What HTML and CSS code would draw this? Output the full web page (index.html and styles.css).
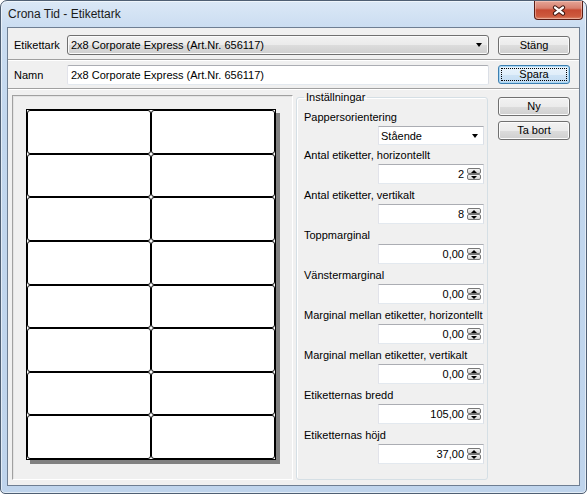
FILE: index.html
```
<!DOCTYPE html>
<html lang="sv">
<head>
<meta charset="UTF-8">
<title>Crona Tid - Etikettark</title>
<link rel="stylesheet" href="styles.css">
</head>
<body>

<div class="window">

    <!-- titelrad -->
    <div class="titlebar">
        <span class="title">Crona Tid - Etikettark</span>
        <div class="close">
            <svg width="14" height="11" viewBox="0 0 14 11">
                <path d="M3 2.5 L11 8.5 M11 2.5 L3 8.5" stroke="#3b1510" stroke-width="4.2" stroke-linecap="round" fill="none"/>
                <path d="M3 2.5 L11 8.5 M11 2.5 L3 8.5" stroke="#fff" stroke-width="2.2" stroke-linecap="round" fill="none"/>
            </svg>
        </div>
    </div>

    <div class="client">

        <div class="toprow first">
            <span class="lbl">Etikettark</span>
            <div class="combo wide">
                <span>2x8 Corporate Express (Art.Nr. 656117)</span>
                <i class="arrow"></i>
            </div>
            <div class="btn">Stäng</div>
        </div>

        <div class="toprow second">
            <span class="lbl">Namn</span>
            <div class="textbox wide">2x8 Corporate Express (Art.Nr. 656117)</div>
            <div class="btn default"><span class="focus">Spara</span></div>
        </div>

        <div class="main">

            <!-- förhandsvisning -->
            <div class="preview">
                <div class="sheet">
                    <div class="label"></div><div class="label"></div>
                    <div class="label"></div><div class="label"></div>
                    <div class="label"></div><div class="label"></div>
                    <div class="label"></div><div class="label"></div>
                    <div class="label"></div><div class="label"></div>
                    <div class="label"></div><div class="label"></div>
                    <div class="label"></div><div class="label"></div>
                    <div class="label"></div><div class="label"></div>
                </div>
            </div>

            <fieldset class="settings">
                <legend>Inställningar</legend>

                <div class="fld-label">Pappersorientering</div>
                <div class="select">
                    <span>Stående</span>
                    <i class="arrow"></i>
                </div>

                <div class="fld-label">Antal etiketter, horizontellt</div>
                <div class="spinbox"><span>2</span><div class="spin"><b class="up"></b><b class="down"></b></div></div>

                <div class="fld-label">Antal etiketter, vertikalt</div>
                <div class="spinbox"><span>8</span><div class="spin"><b class="up"></b><b class="down"></b></div></div>

                <div class="fld-label">Toppmarginal</div>
                <div class="spinbox"><span>0,00</span><div class="spin"><b class="up"></b><b class="down"></b></div></div>

                <div class="fld-label">Vänstermarginal</div>
                <div class="spinbox"><span>0,00</span><div class="spin"><b class="up"></b><b class="down"></b></div></div>

                <div class="fld-label">Marginal mellan etiketter, horizontellt</div>
                <div class="spinbox"><span>0,00</span><div class="spin"><b class="up"></b><b class="down"></b></div></div>

                <div class="fld-label">Marginal mellan etiketter, vertikalt</div>
                <div class="spinbox"><span>0,00</span><div class="spin"><b class="up"></b><b class="down"></b></div></div>

                <div class="fld-label">Etiketternas bredd</div>
                <div class="spinbox"><span>105,00</span><div class="spin"><b class="up"></b><b class="down"></b></div></div>

                <div class="fld-label">Etiketternas höjd</div>
                <div class="spinbox"><span>37,00</span><div class="spin"><b class="up"></b><b class="down"></b></div></div>
            </fieldset>

            <div class="side">
                <div class="btn">Ny</div>
                <div class="btn">Ta bort</div>
            </div>

        </div>
    </div>
</div>

</body>
</html>
```

FILE: styles.css
```
body {
    margin: 0;
    font-family: "Liberation Sans", Arial, sans-serif;
    font-size: 11px;
    color: #000;
    background: #fff;
}

/* ===== fönster ===== */
.window {
    box-sizing: border-box;
    width: 587px;
    height: 494px;
    border: 1px solid #4f5f73;
    border-radius: 7px 7px 5px 5px;
    background: linear-gradient(to bottom, #dbe8f6 0, #cbddf1 26px, #c2d7ee 120px, #bfd4ec 100%);
    box-shadow: inset 0 0 0 1px rgba(255,255,255,0.55);
    display: flex;
    flex-direction: column;
}

.titlebar {
    height: 26px;
    display: flex;
    align-items: flex-start;
    padding-left: 7px;
}

.title {
    flex: 1;
    line-height: 26px;
    font-size: 12px;
    color: #1b1b1b;
}

.close {
    width: 47px;
    height: 18px;
    margin-right: 3px;
    border: 1px solid #5a1d14;
    border-top: none;
    border-radius: 0 0 4px 4px;
    background: linear-gradient(to bottom, #e4a597 0%, #d7806f 40%, #c64a32 50%, #cd5a3e 85%, #dc8a6e 100%);
    box-shadow: inset 0 0 0 1px rgba(255,220,210,0.45);
    display: flex;
    align-items: center;
    justify-content: center;
}

.client {
    flex: 1;
    margin: 0 6px 7px;
    border: 1px solid #6e7e92;
    background: #f0f0f0;
    display: flex;
    flex-direction: column;
}

/* ===== översta raderna ===== */
.toprow {
    box-sizing: border-box;
    display: flex;
    align-items: center;
    padding-left: 6px;
}

.toprow.first {
    height: 32px;
    padding-top: 3px;
    border-bottom: 1px solid #a0a0a0;
}

.toprow.second {
    height: 29px;
    border-top: 1px solid #fff;
    border-bottom: 1px solid #a0a0a0;
}

.lbl {
    width: 53px;
}

.wide {
    box-sizing: border-box;
    width: 422px;
    height: 20px;
    margin-right: 9px;
}

/* knappar */
.btn {
    box-sizing: border-box;
    width: 72px;
    height: 19px;
    border: 1px solid #707070;
    border-radius: 3px;
    background: linear-gradient(to bottom, #f2f2f2 0%, #ebebeb 50%, #dddddd 50%, #cfcfcf 100%);
    box-shadow: inset 0 0 0 1px #fbfbfb;
    text-align: center;
    line-height: 17px;
}

.btn.default {
    border-color: #3c7fb1;
    background: linear-gradient(to bottom, #eaf4fc 0%, #e0eefa 50%, #cfe4f6 50%, #c3dcf2 100%);
    box-shadow: inset 0 0 0 1px #a9d6f3;
    padding: 2px;
    line-height: 11px;
}

.btn.default .focus {
    display: block;
    height: 11px;
    border: 1px dotted #000;
}

.combo {
    display: flex;
    align-items: center;
    padding: 0 6px 0 3px;
    border: 1px solid #707070;
    border-radius: 3px;
    background: linear-gradient(to bottom, #f2f2f2 0%, #ebebeb 50%, #dddddd 50%, #cfcfcf 100%);
    box-shadow: inset 0 0 0 1px #fbfbfb;
}

.combo span, .select span {
    flex: 1;
}

.arrow {
    width: 0;
    height: 0;
    border-left: 3.5px solid transparent;
    border-right: 3.5px solid transparent;
    border-top: 4px solid #000;
}

.textbox {
    padding: 0 3px;
    line-height: 18px;
    border: 1px solid;
    border-color: #abadb3 #dbdfe6 #e3e9ef #e2e3ea;
    border-radius: 2px;
    background: #fff;
}

/* ===== nedre delen ===== */
.main {
    flex: 1;
    display: flex;
    align-items: flex-start;
    padding: 1px 0 0 4px;
    border-top: 1px solid #fff;
}

.preview {
    box-sizing: border-box;
    width: 281px;
    height: 385px;
    margin-top: 4px;
    margin-right: 3px;
    padding: 13px;
    border: 1px solid;
    border-color: #a0a0a0 #fff #fff #a0a0a0;
    box-shadow: inset 1px 1px 0 #e3e3e3;
}

.sheet {
    width: 248px;
    height: 349px;
    border: 1px solid #000;
    background: #fff;
    box-shadow: 4px 4px 0 #808080;
    display: grid;
    grid-template-columns: repeat(2, 1fr);
    grid-template-rows: repeat(8, 1fr);
}

.label {
    border: 1px solid #000;
    border-radius: 3px;
}

/* inställningar */
.settings {
    box-sizing: border-box;
    width: 192px;
    height: 389px;
    margin: 0;
    padding: 4px 3px 0 7px;
    border: 1px solid #d5dfe5;
    border-radius: 3px;
    box-shadow: inset 1px 1px 0 #fff;
    min-width: 0;
}

.settings legend {
    padding: 0 2px;
    line-height: 13px;
}

.fld-label {
    height: 18px;
    line-height: 18px;
    white-space: nowrap;
}

.select, .spinbox {
    box-sizing: border-box;
    width: 106px;
    margin-left: auto;
    border: 1px solid;
    border-color: #abadb3 #dbdfe6 #e3e9ef #e2e3ea;
    background: #fff;
    display: flex;
    align-items: center;
}

.select {
    height: 19px;
    margin-bottom: 1px;
    padding: 0 5px 0 2px;
}

.spinbox {
    height: 20px;
    margin-bottom: 2px;
    justify-content: flex-end;
    padding-right: 2px;
}

.spin {
    width: 14px;
    margin-left: 3px;
    display: flex;
    flex-direction: column;
}

.spin b {
    box-sizing: border-box;
    height: 6px;
    border: 1px solid #767676;
    border-radius: 2px;
    background: linear-gradient(to bottom, #f6f6f6, #d6d6d6);
    display: flex;
    align-items: center;
    justify-content: center;
}

.spin b::after {
    content: "";
    border-left: 3px solid transparent;
    border-right: 3px solid transparent;
}

.spin .up::after   { border-bottom: 3px solid #000; }
.spin .down::after { border-top: 3px solid #000; }

.side {
    margin-left: 10px;
    margin-top: 6px;
    display: flex;
    flex-direction: column;
    gap: 5px;
}
```
